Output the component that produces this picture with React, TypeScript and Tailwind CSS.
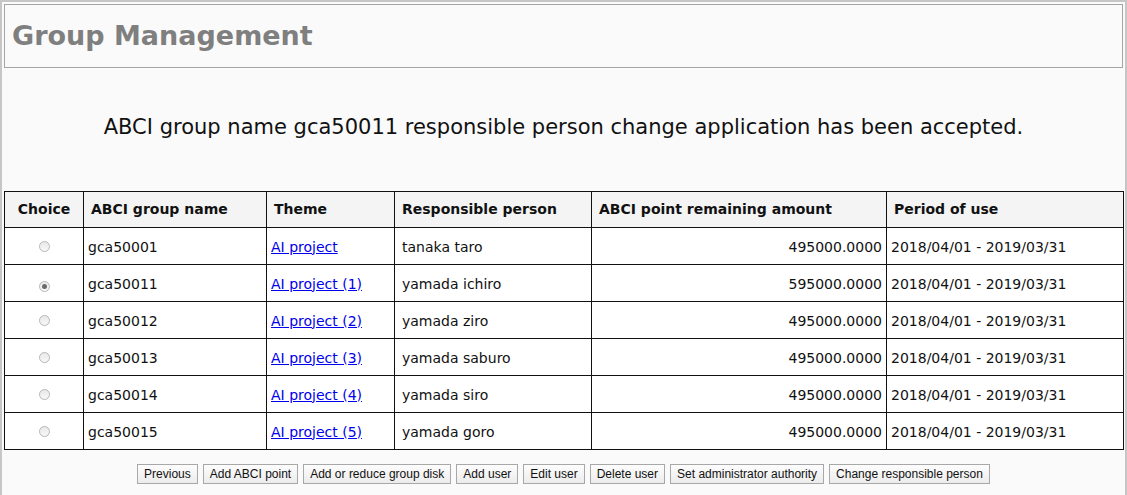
import React from 'react';

const rows = [
  { name: 'gca50001', theme: 'AI project', person: 'tanaka taro', points: '495000.0000', checked: false },
  { name: 'gca50011', theme: 'AI project (1)', person: 'yamada ichiro', points: '595000.0000', checked: true },
  { name: 'gca50012', theme: 'AI project (2)', person: 'yamada ziro', points: '495000.0000', checked: false },
  { name: 'gca50013', theme: 'AI project (3)', person: 'yamada saburo', points: '495000.0000', checked: false },
  { name: 'gca50014', theme: 'AI project (4)', person: 'yamada siro', points: '495000.0000', checked: false },
  { name: 'gca50015', theme: 'AI project (5)', person: 'yamada goro', points: '495000.0000', checked: false },
];

const buttons = [
  'Previous',
  'Add ABCI point',
  'Add or reduce group disk',
  'Add user',
  'Edit user',
  'Delete user',
  'Set administrator authority',
  'Change responsible person',
];

const Radio = ({ checked }: { checked: boolean }) => (
  <span className="inline-flex h-[11px] w-[11px] items-center justify-center rounded-full border border-[#b8b8b8] bg-gradient-to-b from-[#e8e8e8] to-[#f8f8f8]">
    {checked && <span className="h-[5px] w-[5px] rounded-full bg-[#6a6a6a]" />}
  </span>
);

export default function App() {
  return (
    <div className="h-[495px] w-[1127px] overflow-hidden border-t-2 border-l-2 border-r-2 border-[#c6c6c6] bg-[#fafafa] p-[2px] font-['DejaVu_Sans',Verdana,sans-serif] text-[#111]">
      <div className="flex h-[64px] items-center border border-[#a4a4a4] px-[7px]">
        <h1 className="text-[27px] font-bold text-[#7f7f7f]">Group Management</h1>
      </div>

      <p className="mt-[47px] text-center text-[21px] leading-[24px] text-[#111]">
        ABCI group name gca50011 responsible person change application has been accepted.
      </p>

      <table className="mt-[52px] w-[1120px] table-fixed border-collapse text-[14px]">
        <colgroup>
          <col className="w-[79px]" />
          <col className="w-[183px]" />
          <col className="w-[128px]" />
          <col className="w-[197px]" />
          <col className="w-[295px]" />
          <col />
        </colgroup>
        <thead>
          <tr className="h-[36px] bg-[#f4f4f4] font-bold">
            <th className="border border-[#111] text-center">Choice</th>
            <th className="border border-[#111] px-[7px] text-left">ABCI group name</th>
            <th className="border border-[#111] px-[7px] text-left">Theme</th>
            <th className="border border-[#111] px-[7px] text-left">Responsible person</th>
            <th className="border border-[#111] px-[7px] text-left">ABCI point remaining amount</th>
            <th className="border border-[#111] px-[7px] text-left">Period of use</th>
          </tr>
        </thead>
        <tbody className="bg-white">
          {rows.map((r) => (
            <tr key={r.name} className="h-[37px]">
              <td className="border border-[#111] pt-[2px] text-center">
                <Radio checked={r.checked} />
              </td>
              <td className="border border-[#111] px-[4px] pt-[2px]">{r.name}</td>
              <td className="border border-[#111] px-[4px] pt-[2px]">
                <a href="#" className="text-[#0000ee] underline">
                  {r.theme}
                </a>
              </td>
              <td className="border border-[#111] px-[7px] pt-[2px]">{r.person}</td>
              <td className="border border-[#111] px-[4px] pt-[2px] text-right">{r.points}</td>
              <td className="border border-[#111] px-[4px] pt-[2px]">2018/04/01 - 2019/03/31</td>
            </tr>
          ))}
        </tbody>
      </table>

      <div className="mt-[14px] flex justify-center gap-[5px] font-['Liberation_Sans',Arial,sans-serif]">
        {buttons.map((b) => (
          <button
            key={b}
            className="h-[20px] border border-[#a8a8a8] bg-gradient-to-b from-[#fdfdfd] to-[#ececec] px-[6px] text-[12px] leading-[18px] text-[#111]"
          >
            {b}
          </button>
        ))}
      </div>
    </div>
  );
}
